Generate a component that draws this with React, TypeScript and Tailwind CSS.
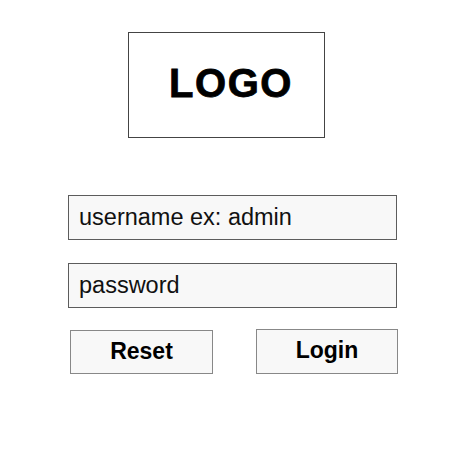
export default function App() {
  const font = { fontFamily: '"Liberation Sans", Arial, sans-serif' };
  return (
    <div className="w-[450px] h-[450px] bg-white flex flex-col" style={font}>
      <div className="ml-[128px] mt-[32px] w-[197px] h-[106px] border border-[#444444] flex items-center justify-center pb-[4px] pl-[9px]">
        <span className="text-[40px] font-bold text-black leading-none tracking-[1.5px] [-webkit-text-stroke:0.8px_black]">LOGO</span>
      </div>
      <div className="ml-[68px] mt-[57px] w-[329px] h-[45px] border border-[#5c5c5c] bg-[#f8f8f8] flex items-center pl-[10px]">
        <span className="text-[23.5px] text-[#111111] leading-none">username ex: admin</span>
      </div>
      <div className="ml-[68px] mt-[23px] w-[329px] h-[45px] border border-[#5c5c5c] bg-[#f8f8f8] flex items-center pl-[10px]">
        <span className="text-[23.5px] text-[#111111] leading-none">password</span>
      </div>
      <div className="flex flex-row items-start mt-[21px]">
        <div className="ml-[70px] mt-[1px] w-[143px] h-[44px] border border-[#888888] bg-[#f8f8f8] flex items-center justify-center pb-[2px]">
          <span className="text-[23px] font-bold text-black leading-none">Reset</span>
        </div>
        <div className="ml-[43px] w-[142px] h-[45px] border border-[#888888] bg-[#f8f8f8] flex items-center justify-center pb-[2px]">
          <span className="text-[23px] font-bold text-black leading-none">Login</span>
        </div>
      </div>
    </div>
  );
}
